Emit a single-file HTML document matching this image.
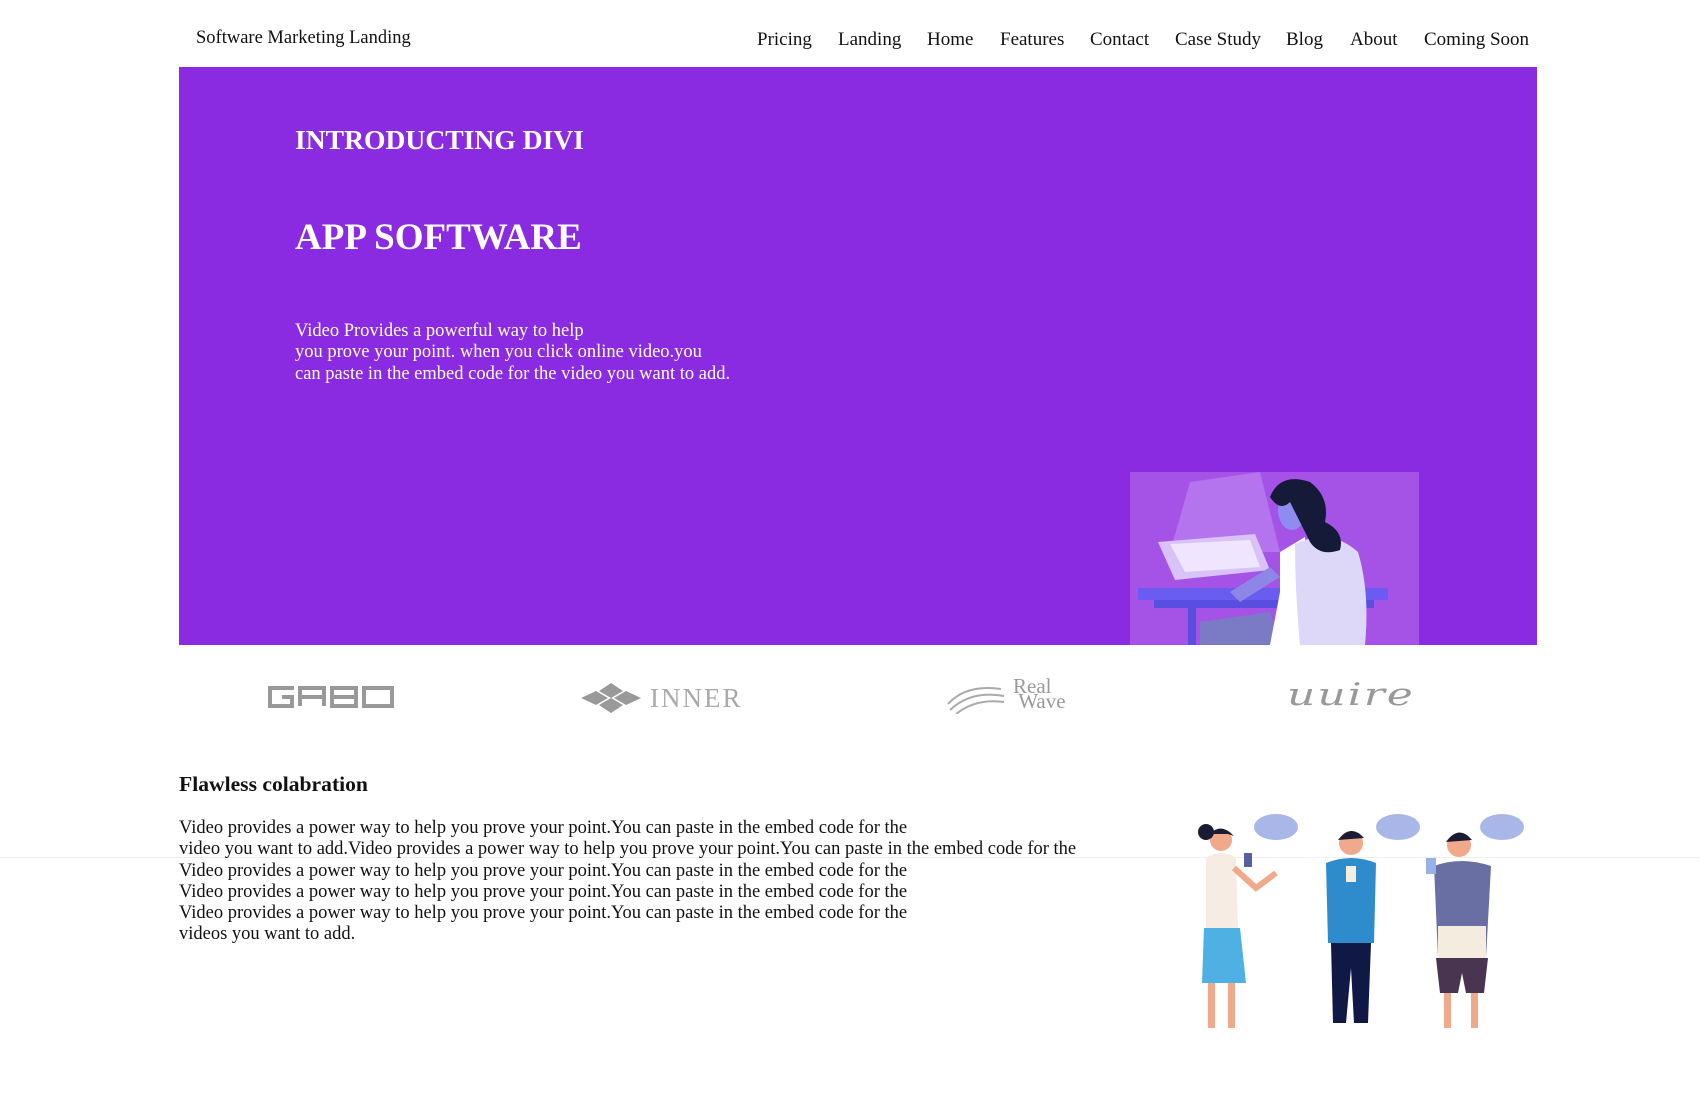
<!DOCTYPE html>
<html><head><meta charset="utf-8"><style>
*{margin:0;padding:0;box-sizing:border-box}
body{width:1700px;height:1099px;background:#fff;font-family:"Liberation Serif",serif;color:#111;position:relative;overflow:hidden}
.abs{position:absolute;white-space:nowrap}
.nav a{position:absolute;top:29px;font-size:19px;color:#111;text-decoration:none}
.hero{position:absolute;left:179px;top:67px;width:1358px;height:578px;background:#8a2be2}
.w{color:#fff}
</style></head><body>
<div class="abs" style="left:196px;top:28px;font-size:18.5px">Software Marketing Landing</div>
<div class="nav">
<a style="left:757px">Pricing</a><a style="left:838px">Landing</a><a style="left:927px">Home</a><a style="left:1000px">Features</a><a style="left:1090px">Contact</a><a style="left:1175px">Case Study</a><a style="left:1286px">Blog</a><a style="left:1350px">About</a><a style="left:1424px">Coming Soon</a>
</div>
<div class="hero"></div>
<div class="abs w" style="left:295px;top:124px;font-size:27.6px;font-weight:bold">INTRODUCTING DIVI</div>
<div class="abs w" style="left:295px;top:216px;font-size:37px;font-weight:bold">APP SOFTWARE</div>
<div class="abs w" style="left:295px;top:321px;font-size:18.5px;line-height:21.3px">Video Provides a powerful way to help<br>you prove your point. when you click online video.you<br>can paste in the embed code for the video you want to add.</div>
<svg class="abs" style="left:1130px;top:472px" width="289" height="173" viewBox="0 0 289 173">
<rect width="289" height="173" fill="#a552e6"/>
<polygon points="60,10 130,0 150,80 40,80" fill="#b374ee"/>
<polygon points="28,70 125,62 140,98 45,108" fill="#d9c2f7"/>
<polygon points="40,72 120,68 130,95 55,100" fill="#efe5fd"/>
<rect x="8" y="116" width="250" height="12" fill="#6a5cf0"/>
<rect x="24" y="128" width="220" height="8" fill="#5a4ee0"/>
<rect x="58" y="128" width="8" height="45" fill="#5a4ee0"/>
<polygon points="70,150 140,140 150,173 70,173" fill="#7b7ac4"/>
<path d="M100,120 L140,95 L150,105 L110,130 Z" fill="#8d86e6"/>
<path d="M150,80 L175,65 L180,173 L140,173 L150,120 Z" fill="#fff"/>
<path d="M165,72 Q200,55 228,80 Q240,120 235,173 L170,173 Q165,120 165,72Z" fill="#ddd7f8"/>
<ellipse cx="162" cy="38" rx="14" ry="20" fill="#8e8cf0"/>
<path d="M140,25 Q150,0 180,10 Q200,25 195,50 Q215,60 210,78 Q190,85 180,70 Q170,50 160,30 Q150,40 140,25Z" fill="#141a38"/>
</svg>
<svg class="abs" style="left:266px;top:682px" width="132" height="30" viewBox="0 0 132 30"><g fill="none" stroke="#999" stroke-width="4"><path d="M28,6H4V24H26V15H16"/><path d="M34,24V6H58V24M34,15H58"/><path d="M66,6H90V24H66ZM66,15H90"/><path d="M98,6H126V24H98Z"/></g></svg>
<svg class="abs" style="left:579px;top:683px" width="65" height="30" viewBox="0 0 65 30"><g fill="#999"><polygon points="32,0 44,8 32,15 20,8"/><polygon points="32,15 44,22 32,30 20,22"/><polygon points="17,8 29,15 17,22 2,15"/><polygon points="47,8 62,15 47,22 35,15"/></g></svg>
<div class="abs" style="left:650px;top:683px;font-size:27px;color:#aaa;letter-spacing:2px">INNER</div>
<svg class="abs" style="left:946px;top:684px" width="60" height="30" viewBox="0 0 60 30"><g fill="none" stroke="#aaa" stroke-width="2"><path d="M2,20 Q20,0 55,5"/><path d="M4,26 Q25,6 58,12"/><path d="M10,30 Q30,14 58,18"/></g></svg>
<div class="abs" style="left:1013px;top:679px;font-size:21px;color:#999;line-height:15px">Real<br>&nbsp;Wave</div>
<div class="abs" style="left:1287px;top:677px;font-size:44px;font-style:italic;color:#999;letter-spacing:2px;transform:scaleY(0.7);transform-origin:top left;font-family:'DejaVu Serif',serif">uuire</div>
<div class="abs" style="left:179px;top:772px;font-size:21.6px;font-weight:bold">Flawless colabration</div>
<div style="position:absolute;left:0;top:857px;width:1700px;height:1px;background:#eee"></div>
<div class="abs" style="left:179px;top:818px;font-size:18.5px;line-height:21.3px">Video provides a power way to help you prove your point.You can paste in the embed code for the<br>video you want to add.Video provides a power way to help you prove your point.You can paste in the embed code for the<br>Video provides a power way to help you prove your point.You can paste in the embed code for the<br>Video provides a power way to help you prove your point.You can paste in the embed code for the<br>Video provides a power way to help you prove your point.You can paste in the embed code for the<br>videos you want to add.</div>
<svg class="abs" style="left:1176px;top:808px" width="360" height="230" viewBox="0 0 360 230">
<g fill="#a9b6e8"><ellipse cx="100" cy="19" rx="22" ry="13"/><ellipse cx="222" cy="19" rx="22" ry="13"/><ellipse cx="326" cy="19" rx="22" ry="13"/></g>
<circle cx="45" cy="32" r="11" fill="#f0a98a"/><circle cx="30" cy="24" r="8" fill="#1b1b33"/><path d="M34,26 Q45,14 58,28 L52,26Z" fill="#1b1b33"/>
<path d="M30,50 Q45,40 60,50 L62,120 L30,120Z" fill="#f6ece3"/>
<path d="M28,120 L64,120 L70,175 L26,175Z" fill="#4fb0e3"/>
<rect x="32" y="175" width="7" height="45" fill="#f0a98a"/><rect x="52" y="175" width="7" height="45" fill="#f0a98a"/>
<path d="M58,60 L80,80 L100,65" stroke="#f0a98a" stroke-width="6" fill="none"/>
<rect x="68" y="45" width="8" height="14" fill="#5560a0"/>
<circle cx="175" cy="35" r="12" fill="#f0a98a"/><path d="M162,32 Q175,15 188,30 Z" fill="#1b1b33"/>
<path d="M150,55 Q175,45 200,55 L198,135 L152,135Z" fill="#2e8ccc"/>
<path d="M155,135 L195,135 L192,215 L178,215 L175,160 L170,215 L157,215Z" fill="#101845"/>
<rect x="170" y="58" width="10" height="16" fill="#f4ede4"/>
<circle cx="283" cy="37" r="12" fill="#f0a98a"/><path d="M270,34 Q283,16 296,32 Z" fill="#1b1b33"/>
<path d="M258,58 Q285,48 315,58 L310,150 L262,150Z" fill="#6a6fa3"/>
<rect x="262" y="118" width="48" height="32" fill="#f5ece0"/>
<path d="M260,150 L312,150 L308,185 L290,185 L286,165 L282,185 L264,185Z" fill="#4a3550"/>
<rect x="268" y="185" width="7" height="35" fill="#f0a98a"/><rect x="295" y="185" width="7" height="35" fill="#f0a98a"/>
<rect x="250" y="50" width="10" height="16" fill="#9ab0e8"/>
</svg>
</body></html>
